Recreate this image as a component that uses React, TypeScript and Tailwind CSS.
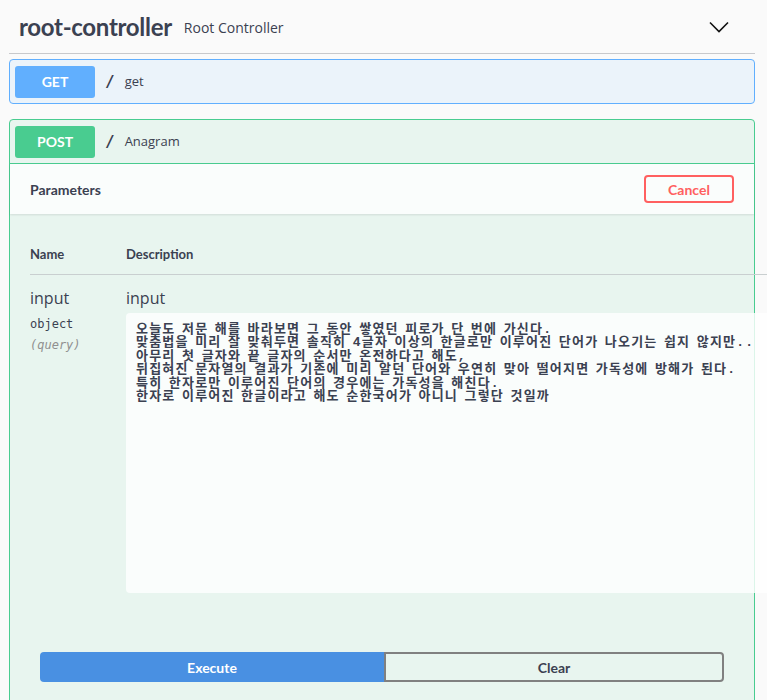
import { useState } from 'react'

const heading = { fontFamily: 'Lato, "Noto Sans", sans-serif' }
const body = { fontFamily: '"Open Sans", "Noto Sans", sans-serif' }
const mono = { fontFamily: '"DejaVu Sans Mono", "Liberation Mono", monospace' }
const koMono = {
  fontFamily: '"Liberation Mono", "Noto Sans CJK KR", monospace',
  letterSpacing: '1.2px',
  wordSpacing: '-2.5px',
}

const sample = `오늘도 저문 해를 바라보면 그 동안 쌓였던 피로가 단 번에 가신다.
맞춤법을 미리 잘 맞춰두면 솔직히 4글자 이상의 한글로만 이루어진 단어가 나오기는 쉽지 않지만..
아무리 첫 글자와 끝 글자의 순서만 온전하다고 해도,
뒤집혀진 문자열의 결과가 기존에 미리 알던 단어와 우연히 맞아 떨어지면 가독성에 방해가 된다.
특히 한자로만 이루어진 단어의 경우에는 가독성을 해친다.
한자로 이루어진 한글이라고 해도 순한국어가 아니니 그렇단 것일까`

function Chevron() {
  return (
    <svg width="20" height="20" viewBox="0 0 20 20" fill="none">
      <path d="M1 5.5 L10 14.5 L19 5.5" stroke="#111" strokeWidth="1.6" />
    </svg>
  )
}

export default function App() {
  const [input, setInput] = useState(sample)

  return (
    <div className="w-full min-h-[700px] overflow-hidden bg-[#fafafa] text-[#3b4151]" style={body}>
      <div className="pl-[9px] pr-[12px]">
        {/* Tag header */}
        <div className="flex h-[54px] items-center border-b border-[#c8c9cc] pl-[10px] pr-[26px]">
          <span className="text-[24px] font-bold leading-none tracking-[-0.3px]" style={heading}>
            root-controller
          </span>
          <span className="ml-[12px] mt-[2px] text-[14px]">Root Controller</span>
          <span className="ml-auto">
            <Chevron />
          </span>
        </div>

        {/* GET */}
        <div className="mt-[5px] flex h-[45px] items-center rounded-[4px] border border-[#61affe] bg-[#ebf3fa] px-[5px]">
          <span
            className="flex h-[32px] w-[80px] items-center justify-center rounded-[3px] bg-[#61affe] text-[14px] font-bold text-white"
            style={heading}
          >
            GET
          </span>
          <span className="px-[10px] text-[16px] font-semibold" style={mono}>/</span>
          <span className="text-[13px]">get</span>
        </div>

        {/* POST */}
        <div className="mt-[15px] rounded-[4px] border border-[#49cc90] bg-[#e8f5ef] pb-[40px]">
          <div className="flex h-[44px] items-center border-b border-[#49cc90] px-[5px]">
            <span
              className="flex h-[32px] w-[80px] items-center justify-center rounded-[3px] bg-[#49cc90] text-[14px] font-bold text-white"
              style={heading}
            >
              POST
            </span>
            <span className="px-[10px] text-[16px] font-semibold" style={mono}>/</span>
            <span className="text-[13px]">Anagram</span>
          </div>

          <div className="flex h-[50px] items-center bg-[#fafdfc] px-[20px] shadow-[0_1px_2px_rgba(0,0,0,0.1)]">
            <span className="text-[14px] font-bold" style={heading}>Parameters</span>
            <button
              className="ml-auto h-[28px] w-[90px] rounded-[4px] border-2 border-[#ff6060] text-[14px] font-bold text-[#ff6060]"
              style={heading}
            >
              Cancel
            </button>
          </div>

          <div className="px-[20px] pt-[20px]">
            <div className="w-[760px]">
              <div className="flex border-b border-[#c9cfd0] py-[12px] text-[13px] font-bold leading-[16px]" style={heading}>
                <span className="w-[96px]">Name</span>
                <span>Description</span>
              </div>
              <div className="flex pt-[10px]">
                <div className="w-[96px]">
                  <div className="text-[16px] leading-[26px]">input</div>
                  <div className="mt-[4px] text-[12px] leading-[18px]" style={mono}>object</div>
                  <div className="mt-[3px] text-[12px] italic leading-[18px] text-[#909090]" style={mono}>(query)</div>
                </div>
                <div>
                  <div className="text-[16px] leading-[26px]">input</div>
                  <textarea
                    value={input}
                    onChange={(e) => setInput(e.target.value)}
                    wrap="off"
                    className="mt-[2px] block h-[280px] w-[664px] resize-none overflow-hidden rounded-[4px] bg-white/80 pl-[10px] pt-[10px] text-[13px] font-bold leading-[13.4px] text-[#3b4151] outline-none"
                    style={koMono}
                  />
                </div>
              </div>
            </div>
          </div>

          <div className="mt-[59px] flex px-[30px]">
            <button
              className="h-[30px] w-[344px] rounded-l-[4px] bg-[#4990e2] text-[14px] font-bold text-white"
              style={heading}
            >
              Execute
            </button>
            <button
              className="h-[30px] flex-1 rounded-r-[4px] border-2 border-[#808080] text-[14px] font-bold text-[#3b4151]"
              style={heading}
            >
              Clear
            </button>
          </div>
        </div>
      </div>
    </div>
  )
}
